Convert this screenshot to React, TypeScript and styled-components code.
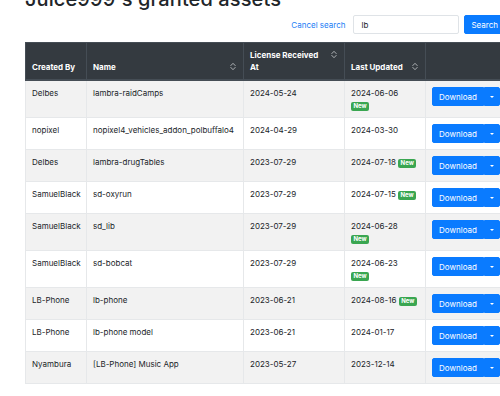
import React from "react";
import styled, { createGlobalStyle } from "styled-components";

type Asset = {
  creator: string;
  name: string;
  received: string;
  updated: string;
  isNew: boolean;
  badgeBelow?: boolean;
};

const assets: Asset[] = [
  { creator: "Delbes", name: "lambra-raidCamps", received: "2024-05-24", updated: "2024-06-06", isNew: true, badgeBelow: true },
  { creator: "nopixel", name: "nopixel4_vehicles_addon_polbuffalo4", received: "2024-04-29", updated: "2024-03-30", isNew: false },
  { creator: "Delbes", name: "lambra-drugTables", received: "2023-07-29", updated: "2024-07-18", isNew: true },
  { creator: "SamuelBlack", name: "sd-oxyrun", received: "2023-07-29", updated: "2024-07-15", isNew: true },
  { creator: "SamuelBlack", name: "sd_lib", received: "2023-07-29", updated: "2024-06-28", isNew: true, badgeBelow: true },
  { creator: "SamuelBlack", name: "sd-bobcat", received: "2023-07-29", updated: "2024-06-23", isNew: true, badgeBelow: true },
  { creator: "LB-Phone", name: "lb-phone", received: "2023-06-21", updated: "2024-08-16", isNew: true },
  { creator: "LB-Phone", name: "lb-phone model", received: "2023-06-21", updated: "2024-01-17", isNew: false },
  { creator: "Nyambura", name: "[LB-Phone] Music App", received: "2023-05-27", updated: "2023-12-14", isNew: false },
];

const GlobalStyle = createGlobalStyle`
  body {
    margin: 0;
    background: #fff;
    color: #212529;
    font-family: Inter, "Liberation Sans", Arial, sans-serif;
    overflow: hidden;
  }
`;

const Page = styled.div`
  display: flow-root;
  width: 480px;
  padding-left: 25px;
`;

const Title = styled.h1`
  margin: -13px 0 0;
  font-size: 20px;
  font-weight: 500;
  line-height: 24px;
  letter-spacing: 0.1px;
`;

const SearchBar = styled.form`
  display: flex;
  justify-content: flex-end;
  align-items: center;
  margin: 4px 0 8px;
`;

const CancelLink = styled.a`
  color: #1a7cf5;
  font-size: 8px;
  line-height: 12px;
  text-decoration: none;
  margin-right: 8px;
`;

const SearchInput = styled.input`
  box-sizing: border-box;
  width: 106px;
  height: 19px;
  padding: 3px 7px;
  border: 1px solid #dfe3e7;
  border-radius: 2px;
  font-family: inherit;
  font-size: 8px;
  color: #212529;
  margin-right: 5px;
`;

const BlueButton = styled.button`
  box-sizing: border-box;
  height: 19px;
  background: #0a7bff;
  border: 1px solid #0a7bff;
  color: #fff;
  font-family: inherit;
  font-size: 8px;
  line-height: 12px;
  padding: 3px 6px;
  border-radius: 2px;
`;

const Table = styled.table`
  width: 480px;
  table-layout: fixed;
  border-collapse: collapse;
  font-size: 8px;
  line-height: 12px;
`;

const HeadCell = styled.th`
  background: #343a40;
  color: #fff;
  font-weight: 700;
  text-align: left;
  vertical-align: bottom;
  padding: 6px;
  border: 1px solid #454d55;
  border-bottom-width: 2px;
`;

const Row = styled.tr`
  &:nth-of-type(odd) {
    background: #f2f2f2;
  }
`;

const Cell = styled.td`
  vertical-align: top;
  padding: 6px;
  border: 1px solid #e6e8ea;
  white-space: nowrap;
`;

const SortIcon = styled.svg`
  float: right;
  width: 8px;
  height: 9px;
  margin-top: 1px;
`;

const Badge = styled.span`
  display: inline-block;
  background: #3aa651;
  color: #fff;
  font-size: 6px;
  font-weight: 700;
  line-height: 1;
  padding: 1.5px 2.5px;
  border-radius: 2px;
`;

const ButtonGroup = styled.div`
  display: inline-flex;
`;

const MainButton = styled(BlueButton)`
  border-radius: 2px 0 0 2px;
`;

const ToggleButton = styled(BlueButton)`
  display: flex;
  align-items: center;
  padding: 3px 5px;
  border-radius: 0 2px 2px 0;
`;

const Caret = styled.span`
  width: 0;
  height: 0;
  border-top: 2.4px solid #fff;
  border-left: 2.4px solid transparent;
  border-right: 2.4px solid transparent;
`;

function Sort() {
  return (
    <SortIcon viewBox="0 0 8 9" fill="none" stroke="#b9bcc0" strokeWidth="0.9" strokeLinecap="round" strokeLinejoin="round">
      <path d="M1.8 3.6 L4 1.3 L6.2 3.6" />
      <path d="M1.8 5.4 L4 7.7 L6.2 5.4" />
    </SortIcon>
  );
}

export default function App() {
  return (
    <>
      <GlobalStyle />
      <Page>
        <Title>Juice999's granted assets</Title>
        <SearchBar onSubmit={(e) => e.preventDefault()}>
          <CancelLink href="#">Cancel search</CancelLink>
          <SearchInput value="lb" readOnly />
          <BlueButton type="submit">Search</BlueButton>
        </SearchBar>
        <Table>
          <colgroup>
            <col style={{ width: 61 }} />
            <col style={{ width: 157 }} />
            <col style={{ width: 101 }} />
            <col style={{ width: 81 }} />
            <col style={{ width: 80 }} />
          </colgroup>
          <thead>
            <tr>
              <HeadCell>Created By</HeadCell>
              <HeadCell>
                <Sort />
                Name
              </HeadCell>
              <HeadCell>
                <Sort />
                License Received
                <br />
                At
              </HeadCell>
              <HeadCell>
                <Sort />
                Last Updated
              </HeadCell>
              <HeadCell></HeadCell>
            </tr>
          </thead>
          <tbody>
            {assets.map(function (asset: Asset, index: number) {
              return (
                <Row key={index}>
                  <Cell>{asset.creator}</Cell>
                  <Cell>{asset.name}</Cell>
                  <Cell>{asset.received}</Cell>
                  <Cell>
                    {asset.updated}
                    {asset.isNew && (asset.badgeBelow ? <br /> : " ")}
                    {asset.isNew && <Badge>New</Badge>}
                  </Cell>
                  <Cell>
                    <ButtonGroup>
                      <MainButton type="button">Download</MainButton>
                      <ToggleButton type="button" aria-label="More">
                        <Caret />
                      </ToggleButton>
                    </ButtonGroup>
                  </Cell>
                </Row>
              );
            })}
          </tbody>
        </Table>
      </Page>
    </>
  );
}
